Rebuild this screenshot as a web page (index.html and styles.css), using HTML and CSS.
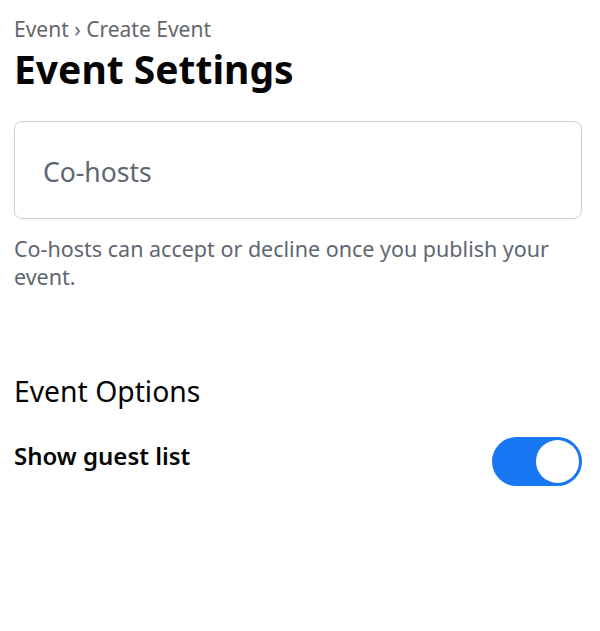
FILE: index.html
```html
<!DOCTYPE html>
<html>
<head>
<meta charset="utf-8">
<link rel="stylesheet" href="styles.css">
</head>
<body>
<div class="page">
  <div class="crumbs">Event › Create Event</div>
  <h1 class="title">Event Settings</h1>
  <div class="field"><span class="placeholder">Co-hosts</span></div>
  <p class="help">Co-hosts can accept or decline once you publish your event.</p>
  <h2 class="section">Event Options</h2>
  <div class="row">
    <span class="row-label">Show guest list</span>
    <span class="toggle"><span class="knob"></span></span>
  </div>
</div>
</body>
</html>
```
FILE: styles.css
```css
html, body { margin: 0; padding: 0; background: #fff; }
body { font-family: "Noto Sans", "Open Sans", sans-serif; color: #050505; }
.page { padding: 15px 18px 0 14px; }
.crumbs { font-size: 21px; line-height: 28px; color: #65676b; }
.title { margin: 2px 0 0; font-size: 39px; line-height: 48px; font-weight: 700; color: #050505; }
.field { margin-top: 28px; height: 96px; border: 1px solid #ccd0d5; border-radius: 8px; display: flex; align-items: center; padding-left: 28px; }
.placeholder { padding-top: 3px; font-size: 26.5px; color: #606770; }
.help { margin: 16px 0 0; font-size: 21.5px; line-height: 28px; color: #606770; }
.section { margin: 82px 0 0; font-size: 28.3px; line-height: 36px; font-weight: 400; }
.row { margin-top: 28px; display: flex; align-items: flex-start; justify-content: space-between; }
.row-label { margin-top: 3px; font-size: 24px; line-height: 32px; font-weight: 600; }
.toggle { width: 90px; height: 49px; border-radius: 25px; background: #1877f2; display: flex; align-items: center; justify-content: flex-end; padding-right: 3px; box-sizing: border-box; }
.knob { width: 43px; height: 43px; border-radius: 50%; background: #fff; }
```
